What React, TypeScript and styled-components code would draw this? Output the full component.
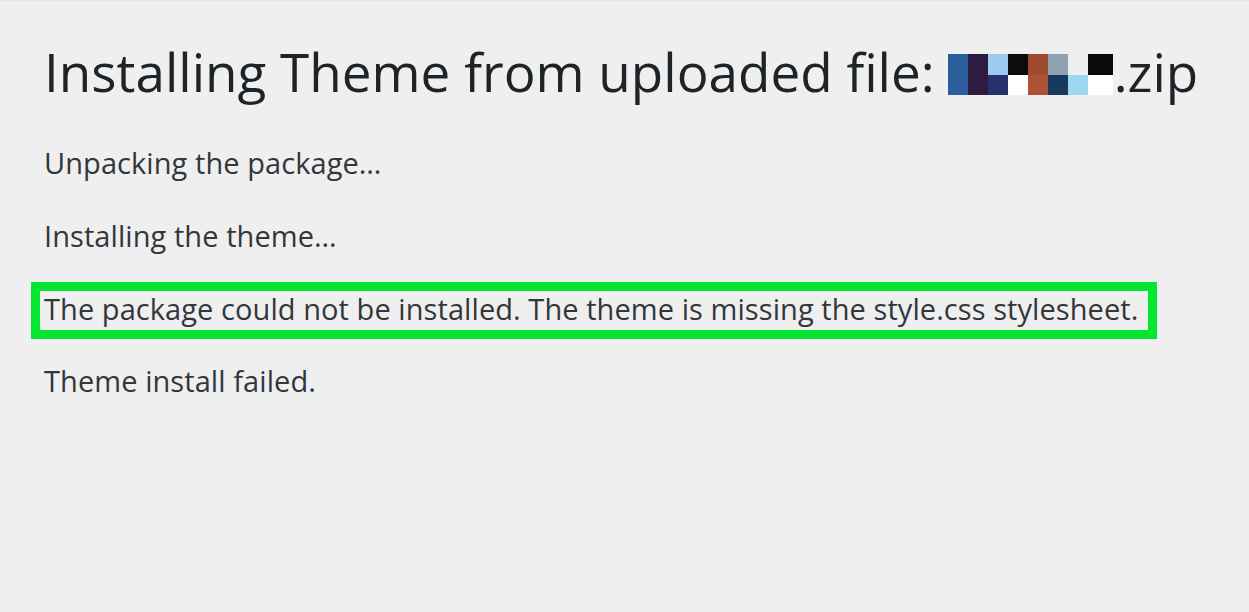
import styled, { createGlobalStyle } from "styled-components";

const GlobalStyle = createGlobalStyle`
  html, body {
    margin: 0;
    padding: 0;
    background: #efefef;
  }
  body {
    font-family: "Open Sans", "Noto Sans", "DejaVu Sans", sans-serif;
  }
`;

// pixelated file name, as in the screenshot
const pixels: string[][] = [
  ["#2a5e9c", "#2d1b40", "#9ccdf0", "#0c0c0c", "#a04a2d", "#8ea2b4", "transparent", "#0a0a0a"],
  ["#2a5e9c", "#2d1b40", "#27316c", "#ffffff", "#ab5332", "#17395b", "#9dd6ef", "#ffffff"],
];

const App = () => {
  return (
    <Page>
      <GlobalStyle />
      <Title>
        <span>Installing Theme from uploaded file:</span>
        <Blur aria-label="hidden file name">
          {pixels.map((row, r) =>
            row.map((c, i) => <Cell key={`${r}-${i}`} style={{ background: c }} />)
          )}
        </Blur>
        <span>.zip</span>
      </Title>
      <Message>Unpacking the package…</Message>
      <Message>Installing the theme…</Message>
      <Highlight>
        <Message>
          The package could not be installed. The theme is missing the style.css
          stylesheet.
        </Message>
      </Highlight>
      <Message>Theme install failed.</Message>
    </Page>
  );
};

export default App;

const Page = styled.main`
  width: 1249px;
  height: 612px;
  box-sizing: border-box;
  padding: 36px 0 0 44px;
  border-top: 1px solid #e4e4e4;
  display: flex;
  flex-direction: column;
  align-items: flex-start;
`;

const Title = styled.h1`
  margin: 0 0 38px;
  font-weight: 400;
  font-size: 53px;
  line-height: 70px;
  color: #1d2327;
  display: flex;
  align-items: center;
  white-space: nowrap;
`;

const Blur = styled.span`
  display: inline-grid;
  grid-template-columns: repeat(7, 20px) 25px;
  grid-template-rows: 21px 20px;
  margin: 5px 1px 0 13px;
`;

const Cell = styled.span`
  display: block;
`;

const Message = styled.p`
  margin: 0 0 37px;
  font-size: 29px;
  line-height: 36px;
  letter-spacing: 0.07px;
  color: #32373c;
  white-space: nowrap;
`;

const Highlight = styled.div`
  margin: -9px 0 24px -13px;
  padding: 0 10px 3px 4px;
  border: 9px solid #05e633;
  & > p {
    margin: 0;
  }
`;
